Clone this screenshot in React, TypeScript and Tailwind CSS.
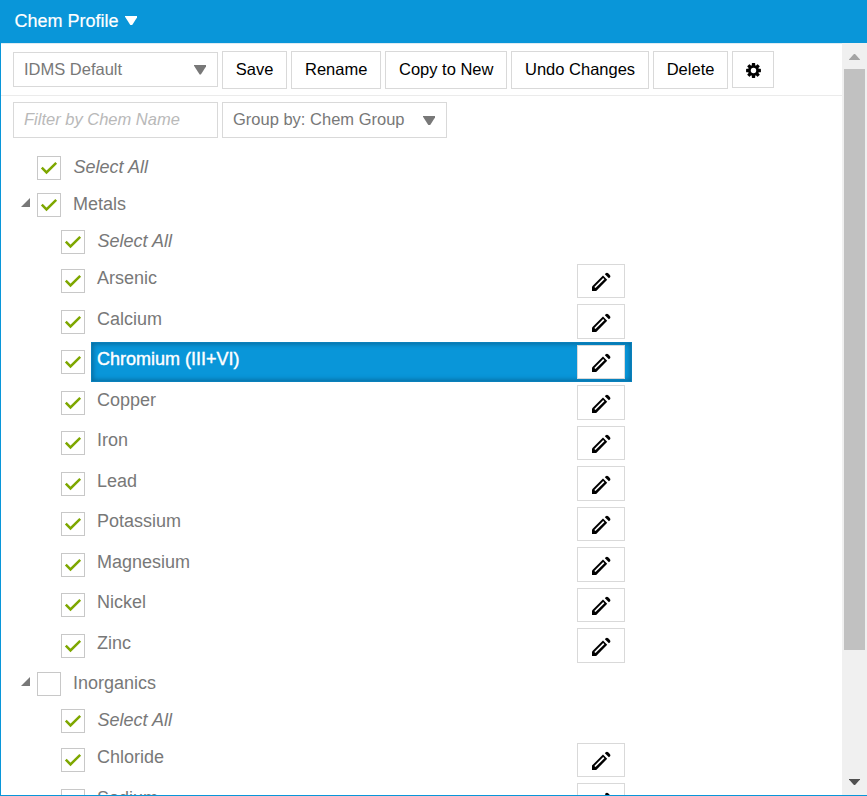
import { useState } from "react";

interface ChemGroup {
  name: string;
  checked: boolean;
  chems: string[];
}

const groups: ChemGroup[] = [
  {
    name: "Metals",
    checked: true,
    chems: [
      "Arsenic",
      "Calcium",
      "Chromium (III+VI)",
      "Copper",
      "Iron",
      "Lead",
      "Potassium",
      "Magnesium",
      "Nickel",
      "Zinc",
    ],
  },
  { name: "Inorganics", checked: false, chems: ["Chloride", "Sodium"] },
];

const actions = ["Save", "Rename", "Copy to New", "Undo Changes", "Delete"];

function CaretDown({ className }: { className: string }) {
  return (
    <svg className={className} viewBox="0 0 12 10" preserveAspectRatio="none" aria-hidden="true">
      <path d="M0 0h12v.8L6.6 10H5.4L0 .8z" fill="currentColor" />
    </svg>
  );
}

function PencilIcon() {
  return (
    <svg className="mt-px h-[19px] w-[19px]" viewBox="0 0 19 19" aria-hidden="true">
      <path d="M0 19v-4.4L11 3.6l4.2 4.2L4.2 19z" fill="#000" />
      <path d="M2.3 14.9l8.9-8.9 1.2 1.2-8.9 8.9z" fill="#fff" />
      <path d="M12.9 2.2l.8-.9a1.8 1.8 0 0 1 2.5 0l1.6 1.6a1.8 1.8 0 0 1 0 2.5l-.9.8z" fill="#000" />
    </svg>
  );
}

function GearIcon() {
  return (
    <svg className="h-[15px] w-[15px]" viewBox="-8 -8 16 16" aria-hidden="true">
      {[0, 45, 90, 135].map((angle) => (
        <rect key={angle} x={-1.8} y={-7.9} width={3.6} height={15.8} rx={0.6} transform={`rotate(${angle})`} />
      ))}
      <circle r={5.8} />
      <circle r={2.9} fill="#fff" />
    </svg>
  );
}

function Checkbox({ label, checked, className }: { label: string; checked: boolean; className: string }) {
  const [on, setOn] = useState(checked);

  return (
    <button
      type="button"
      role="checkbox"
      aria-checked={on}
      aria-label={label}
      onClick={() => setOn(!on)}
      className={`h-6 w-6 shrink-0 border border-[#c8c8c8] bg-white ${className}`}
    >
      {on && (
        <svg className="h-[22px] w-[22px]" viewBox="1 1 22 22" fill="none" aria-hidden="true">
          <path d="M4.8 11.7l4.7 4.7 9.7-9.6" stroke="#7ea700" strokeWidth={2.5} />
        </svg>
      )}
    </button>
  );
}

function SelectAllRow({ className }: { className: string }) {
  return (
    <div className={`flex h-[37px] ${className}`}>
      <Checkbox label="Select All" checked className="mt-1.5" />
      <span className="ml-[12.6px] leading-[35.4px] italic">Select All</span>
    </div>
  );
}

function ChemRow({ name, selected, onSelect }: { name: string; selected: boolean; onSelect: () => void }) {
  return (
    <div className="flex h-[40.5px] pl-[60px]">
      <Checkbox label={name} checked className="mt-2" />
      <div
        onClick={onSelect}
        className={`ml-1.5 flex h-[40px] w-[541px] justify-between pr-[7px] pl-1.5 ${
          selected ? "bg-[#0996d9] text-white shadow-[inset_0_0_0_1px_#0a80bb,inset_0_0_5px_2px_#07699a]" : ""
        }`}
      >
        <span className={`leading-[35.4px] ${selected ? "[-webkit-text-stroke:0.4px_white]" : ""}`}>{name}</span>
        <button
          type="button"
          aria-label={`Edit ${name}`}
          className="mt-[2.9px] flex h-[34.5px] w-12 items-center justify-center border border-[#d9d9d9] bg-white"
        >
          <PencilIcon />
        </button>
      </div>
    </div>
  );
}

export default function App() {
  const [selected, setSelected] = useState("Chromium (III+VI)");

  return (
    <div className="flex h-[796px] w-[867px] flex-col overflow-hidden bg-white font-['Liberation_Sans',Arial,sans-serif] text-[16.5px] text-[#787878]">
      <header className="flex h-[43px] shrink-0 items-center bg-[#0996d9] pl-[14.5px] text-lg text-white">
        <span className="-mt-0.5 [-webkit-text-stroke:0.2px_white]">Chem Profile</span>
        <CaretDown className="-mt-0.5 ml-1.5 h-[9.5px] w-[12.5px]" />
      </header>

      <div className="flex min-h-0 flex-1 border-b border-l border-[#0996d9]">
        <main className="min-w-0 flex-1 overflow-hidden border-t border-[#dcebf3]">
          <div className="flex h-[52px] items-start gap-1 border-b border-[#ebebeb] pt-[7px] pl-3">
            <button
              type="button"
              className="mt-px flex h-[35px] w-[205px] items-center justify-between border border-[#d9d9d9] pr-[11px] pl-2.5"
            >
              <span>IDMS Default</span>
              <CaretDown className="mt-px h-[9.5px] w-[12.5px]" />
            </button>
            {actions.map((action) => (
              <button
                key={action}
                type="button"
                className="h-[38px] shrink-0 border border-[#d9d9d9] px-[12.8px] pb-0.5 text-black"
              >
                {action}
              </button>
            ))}
            <button
              type="button"
              aria-label="Settings"
              className="flex h-[37px] w-[42px] items-center justify-center border border-[#d9d9d9] pt-px text-black"
            >
              <GearIcon />
            </button>
          </div>

          <div className="flex gap-1 pt-1.5 pl-3">
            <input
              type="text"
              placeholder="Filter by Chem Name"
              className="h-9 w-[205px] border border-[#d9d9d9] px-2.5 pb-0.5 italic outline-none placeholder:text-[#b9b9b9]"
            />
            <button
              type="button"
              className="flex h-9 w-[225px] items-center justify-between border border-[#d9d9d9] pr-[11px] pb-px pl-2.5"
            >
              <span>Group by: Chem Group</span>
              <CaretDown className="mt-0.5 h-[9.5px] w-[12.5px]" />
            </button>
          </div>

          <div className="pt-3 text-lg">
            <SelectAllRow className="pl-9" />
            {groups.map((group) => (
              <section key={group.name}>
                <div className="flex h-[37px] pl-5">
                  <svg className="mt-[10.5px] mr-[7px] h-[9px] w-[9px]" viewBox="0 0 9 9" aria-hidden="true">
                    <path d="M9 0v9H0z" fill="#787878" />
                  </svg>
                  <Checkbox label={group.name} checked={group.checked} className="mt-1.5" />
                  <span className="ml-3 leading-[35.4px]">{group.name}</span>
                </div>
                <SelectAllRow className="pl-[60px]" />
                {group.chems.map((chem) => (
                  <ChemRow key={chem} name={chem} selected={chem === selected} onSelect={() => setSelected(chem)} />
                ))}
              </section>
            ))}
          </div>
        </main>

        <aside className="flex w-[25px] shrink-0 flex-col items-center bg-[#f0f0f0] pb-2.5">
          <CaretDown className="mt-[11px] mb-[9px] h-1.5 w-[11px] shrink-0 rotate-180 text-[#a3a3a3]" />
          <div className="h-[581px] w-[21px] shrink-0 bg-[#c1c1c1]" />
          <CaretDown className="mt-auto h-1.5 w-[11px] shrink-0 text-[#505050]" />
        </aside>
      </div>
    </div>
  );
}
